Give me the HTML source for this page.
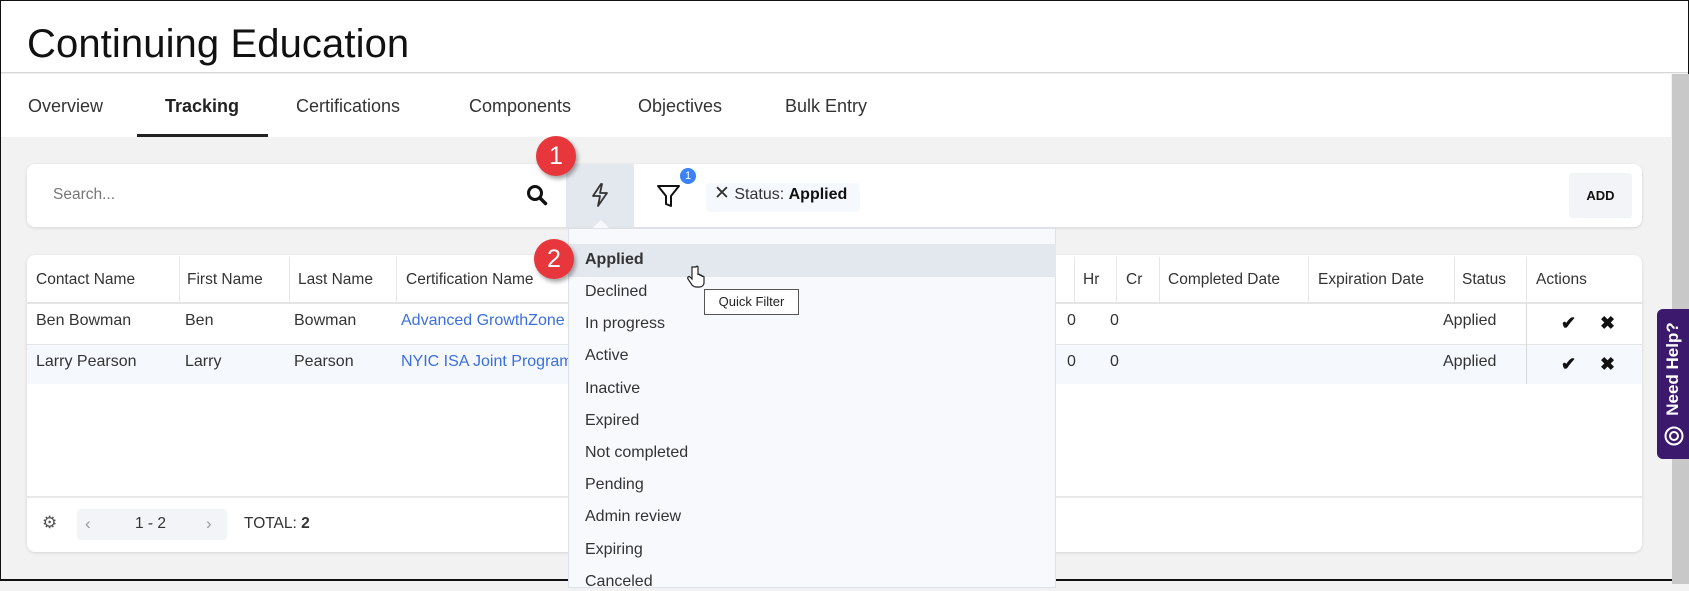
<!DOCTYPE html>
<html><head><meta charset="utf-8"><style>
*{box-sizing:border-box;margin:0;padding:0}
body{width:1689px;height:581px;overflow:hidden;background:#f2f2f2;font-family:"Liberation Sans",sans-serif;color:#222;position:relative;border:1px solid #111;border-bottom:2px solid #111}
.abs{position:absolute}
.hdr{left:0;top:0;width:1687px;height:72px;background:#fff;border-bottom:1px solid #d6d6d6}
.title{left:26px;top:21px;font-size:40px;color:#111;letter-spacing:0.1px}
.tabs{left:0;top:73px;width:1670px;height:63px;background:#fff}
.tab{position:absolute;top:22px;font-size:18px;color:#333}
.sb{left:1671px;top:73px;width:18px;height:510px;background:#c8c8c8}
.card{background:#fff;border-radius:8px;box-shadow:0 1px 3px rgba(0,0,0,.12)}
.t{position:absolute;font-size:15.5px;color:#333;white-space:nowrap}
.dd{left:567px;top:227px;width:488px;height:360px;background:#f7f9fc;border:1px solid #dde2ea}
.it{position:absolute;left:16px;font-size:16px;color:#333}
.badge{width:40px;height:40px;border-radius:50%;background:#e8373c;color:#fff;font-size:25px;text-align:center;line-height:40px;box-shadow:2px 3px 4px rgba(0,0,0,.35)}
.vl{position:absolute;width:1px;background:#e6e6e6}
</style></head><body>
<div class="abs hdr"></div>
<div class="abs title">Continuing Education</div>
<div class="abs tabs">
<div class="tab" style="left:27px">Overview</div>
<div class="tab" style="left:164px;font-weight:bold;color:#222">Tracking</div>
<div class="tab" style="left:295px">Certifications</div>
<div class="tab" style="left:468px">Components</div>
<div class="tab" style="left:637px">Objectives</div>
<div class="tab" style="left:784px">Bulk Entry</div>
<div class="abs" style="left:136px;top:60px;width:131px;height:3px;background:#222"></div>
</div>
<div class="abs sb"></div>

<div class="abs card" style="left:26px;top:163px;width:1615px;height:63px"></div>
<div class="t" style="left:52px;top:185px;color:#777">Search...</div>
<svg class="abs" style="left:525px;top:183px" width="22" height="22" viewBox="0 0 22 22"><circle cx="9" cy="9" r="6.5" fill="none" stroke="#111" stroke-width="3"/><path d="M14 14l5.5 5.5" stroke="#111" stroke-width="3.5" stroke-linecap="round"/></svg>
<div class="abs" style="left:565px;top:163px;width:68px;height:63px;background:#e3e7ee"></div>
<svg class="abs" style="left:588px;top:181px" width="22" height="26" viewBox="0 0 22 26"><path d="M12 2L4 14h7l-2 10 9-13h-7l2-9z" fill="none" stroke="#333" stroke-width="1.8" stroke-linejoin="round"/></svg>
<div class="abs" style="left:592px;top:219px;width:0;height:0;border-left:8px solid transparent;border-right:8px solid transparent;border-bottom:8px solid #f7f9fc"></div>
<svg class="abs" style="left:655px;top:182px" width="26" height="26" viewBox="0 0 26 26"><path d="M2 3h21l-8 10v10l-5-2v-8z" fill="none" stroke="#111" stroke-width="2" stroke-linejoin="round"/></svg>
<div class="abs" style="left:679px;top:167px;width:16px;height:16px;border-radius:50%;background:#3b82f6;color:#fff;font-size:11px;text-align:center;line-height:16px">1</div>
<div class="abs" style="left:705px;top:182px;width:154px;height:29px;background:#f5f8fc;border-radius:4px"></div>
<div class="t" style="left:713px;top:185px;font-size:16px"><span style="font-size:19px;line-height:16px">✕</span> Status: <b style="color:#111">Applied</b></div>
<div class="abs" style="left:1568px;top:172px;width:63px;height:45px;background:#f2f4f7;border-radius:3px;font-size:13px;font-weight:bold;text-align:center;line-height:45px;color:#111">ADD</div>

<div class="abs card" style="left:26px;top:254px;width:1615px;height:297px"></div>
<div class="abs" style="left:26px;top:301px;width:1615px;height:2px;background:#e4e4e4"></div>
<div class="abs" style="left:26px;top:343px;width:1615px;height:1px;background:#e4e4e4"></div>
<div class="abs" style="left:26px;top:344px;width:1615px;height:39px;background:#f5f8fc"></div>
<div class="abs" style="left:26px;top:495px;width:1615px;height:2px;background:#e8e8e8"></div>
<div class="vl" style="left:178px;top:256px;height:45px"></div>
<div class="vl" style="left:288px;top:256px;height:45px"></div>
<div class="vl" style="left:395px;top:256px;height:45px"></div>
<div class="vl" style="left:1073px;top:256px;height:45px"></div>
<div class="vl" style="left:1115px;top:256px;height:45px"></div>
<div class="vl" style="left:1158px;top:256px;height:45px"></div>
<div class="vl" style="left:1307px;top:256px;height:45px"></div>
<div class="vl" style="left:1453px;top:256px;height:45px"></div>
<div class="vl" style="left:1525px;top:256px;height:45px"></div>
<div class="vl" style="left:1525px;top:303px;height:80px;background:#d8d8d8"></div>
<div class="t" style="left:35px;top:270px">Contact Name</div>
<div class="t" style="left:186px;top:270px">First Name</div>
<div class="t" style="left:297px;top:270px">Last Name</div>
<div class="t" style="left:405px;top:270px">Certification Name</div>
<div class="t" style="left:1082px;top:270px">Hr</div>
<div class="t" style="left:1125px;top:270px">Cr</div>
<div class="t" style="left:1167px;top:270px">Completed Date</div>
<div class="t" style="left:1317px;top:270px">Expiration Date</div>
<div class="t" style="left:1461px;top:270px">Status</div>
<div class="t" style="left:1535px;top:270px">Actions</div>
<div class="t" style="left:35px;top:311px;font-size:16px">Ben Bowman</div>
<div class="t" style="left:184px;top:311px;font-size:16px">Ben</div>
<div class="t" style="left:293px;top:311px;font-size:16px">Bowman</div>
<div class="t" style="left:400px;top:311px;font-size:16px;color:#3b6fe0">Advanced GrowthZone</div>
<div class="t" style="left:1066px;top:311px;font-size:16px">0</div>
<div class="t" style="left:1109px;top:311px;font-size:16px">0</div>
<div class="t" style="left:1442px;top:311px;font-size:16px">Applied</div>
<div class="t" style="left:35px;top:352px;font-size:16px">Larry Pearson</div>
<div class="t" style="left:184px;top:352px;font-size:16px">Larry</div>
<div class="t" style="left:293px;top:352px;font-size:16px">Pearson</div>
<div class="t" style="left:400px;top:352px;font-size:16px;color:#3b6fe0">NYIC ISA Joint Program</div>
<div class="t" style="left:1066px;top:352px;font-size:16px">0</div>
<div class="t" style="left:1109px;top:352px;font-size:16px">0</div>
<div class="t" style="left:1442px;top:352px;font-size:16px">Applied</div>
<div class="t" style="left:1560px;top:312px;font-size:18px;color:#111;font-weight:bold">✔</div>
<div class="t" style="left:1599px;top:312px;font-size:18px;color:#111;font-weight:bold">✖</div>
<div class="t" style="left:1560px;top:353px;font-size:18px;color:#111;font-weight:bold">✔</div>
<div class="t" style="left:1599px;top:353px;font-size:18px;color:#111;font-weight:bold">✖</div>

<div class="t" style="left:41px;top:512px;font-size:17px;color:#555">⚙</div>
<div class="abs" style="left:76px;top:508px;width:150px;height:31px;background:#f2f4f7;border-radius:4px"></div>
<div class="t" style="left:84px;top:513px;color:#999;font-size:17px">‹</div>
<div class="t" style="left:134px;top:514px">1 - 2</div>
<div class="t" style="left:205px;top:513px;color:#999;font-size:17px">›</div>
<div class="t" style="left:243px;top:514px">TOTAL: <b>2</b></div>

<div class="abs dd">
<div class="abs" style="left:0;top:15px;width:487px;height:33px;background:#e3e7ee"></div>
<div class="it" style="top:22px;font-weight:bold;color:#333">Applied</div>
<div class="it" style="top:54px">Declined</div>
<div class="it" style="top:86px">In progress</div>
<div class="it" style="top:118px">Active</div>
<div class="it" style="top:151px">Inactive</div>
<div class="it" style="top:183px">Expired</div>
<div class="it" style="top:215px">Not completed</div>
<div class="it" style="top:247px">Pending</div>
<div class="it" style="top:279px">Admin review</div>
<div class="it" style="top:312px">Expiring</div>
<div class="it" style="top:344px">Canceled</div>
</div>
<div class="abs" style="left:703px;top:288px;width:95px;height:26px;background:#fff;border:1px solid #555;font-size:13px;line-height:24px;text-align:center;color:#222">Quick Filter</div>
<svg class="abs" style="left:686px;top:264px" width="18" height="24" viewBox="0 0 18 24"><path d="M5 2v12l-2-2c-1-1-3 0-2 2l4 6c1 1 2 2 4 2h4c2 0 4-2 4-4v-6c0-1-2-1-2 0v-1c0-1-2-1-2 0v-1c0-1-2-1-2 0V2c0-1-2-1-2 0z" fill="#fff" stroke="#222" stroke-width="1.2"/></svg>

<div class="abs badge" style="left:535px;top:135px">1</div>
<div class="abs badge" style="left:533px;top:238px">2</div>

<div class="abs" style="left:1656px;top:308px;width:33px;height:150px;background:#3b1a6e;border-radius:6px 0 0 6px"></div>
<div class="abs" style="left:1657px;top:318px;width:30px;height:100px;display:flex;align-items:center;justify-content:center"><div style="transform:rotate(-90deg);white-space:nowrap;color:#fff;font-weight:bold;font-size:17px">Need Help?</div></div>
<svg class="abs" style="left:1662px;top:424px" width="22" height="22" viewBox="0 0 22 22"><circle cx="11" cy="11" r="8.5" fill="none" stroke="#fff" stroke-width="2"/><circle cx="11" cy="11" r="4" fill="none" stroke="#fff" stroke-width="2"/></svg>
</body></html>
